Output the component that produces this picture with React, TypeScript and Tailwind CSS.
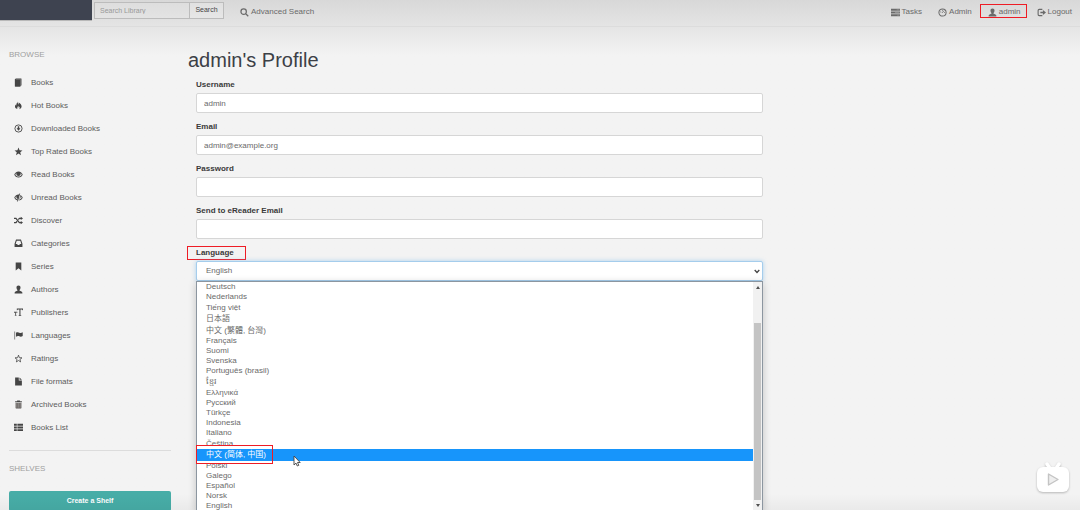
import { useState } from 'react';
import type { ReactNode } from 'react';

type IconName =
  | 'book' | 'fire' | 'download' | 'star' | 'eye' | 'eyeOff' | 'random' | 'inbox'
  | 'bookmark' | 'user' | 'textSize' | 'flag' | 'starEmpty' | 'file' | 'trash' | 'list'
  | 'search' | 'tasks' | 'dashboard' | 'logout';

const icons: Record<IconName, ReactNode> = {
  book: <><path d="M1.500 2.200 3.400 .8H13v12l-1.300 1.700V2.600H3.400L3 3h8v12H1.500z" /><path d="M2 3h9.500v12H2z" /><path d="M13.300 1.500v11.500" stroke="#999" strokeWidth="1.400" /></>,
  fire: <path d="M5.500 1c.4 2.400 2 3.300 2.100 5.600C8.300 5.500 8.500 4 8.200 2.600c3 1.300 5.800 4.300 5.300 7.400-.3 2-1.800 3.700-4 4.500.9-1.500 1-3 .2-4.600-.3 1-.7 1.500-1.400 1.900.2-1.400-.3-2.500-1.100-3.400-.2 2-2 2.800-1.300 6C3 13.600 1.300 11.500 1.800 9c.2-1.100.8-2 1.400-2.800.1.900.3 1.500.8 1.900C3.700 5.600 5.800 4 5.500 1z" />,
  download: <><circle cx="8" cy="8" r="6.400" fill="none" stroke="currentColor" strokeWidth="1.600" /><path d="M6.700 4h2.600v3.500h2.200L8 11.800 4.500 7.500h2.200z" /></>,
  star: <path d="m8 1 1.900 4.900 5.200.3-4 3.300 1.300 5.100L8 11.700l-4.400 2.900 1.300-5.100-4-3.300 5.200-.3z" />,
  eye: <path fillRule="evenodd" d="M8 2.500c3.700 0 6.400 2.500 7.500 5.500-1.100 3-3.800 5.500-7.500 5.500S1.600 11 .5 8C1.600 5 4.300 2.500 8 2.500zM4.300 5.700C3.300 6.300 2.700 7.100 2.300 8c1.200 2.400 3.200 3.700 5.700 3.700s4.500-1.300 5.700-3.700c-.4-.9-1-1.700-2-2.300.6 3-1.200 4.900-3.700 4.900S3.700 8.700 4.300 5.700z" />,
  eyeOff: <><path fillRule="evenodd" d="M8 2.500c3.700 0 6.400 2.500 7.500 5.500-1.100 3-3.800 5.500-7.500 5.500S1.600 11 .5 8C1.600 5 4.300 2.500 8 2.500zM4.300 5.700C3.300 6.300 2.700 7.100 2.300 8c1.200 2.400 3.200 3.700 5.700 3.700s4.500-1.300 5.700-3.700c-.4-.9-1-1.700-2-2.300.6 3-1.200 4.900-3.700 4.900S3.700 8.700 4.300 5.700z" /><path d="M11 1 7.500 15" stroke="#f3f3f3" strokeWidth="2" /><path d="M10 1 6.200 15" stroke="currentColor" strokeWidth="1.600" /></>,
  random: <><path d="M0 4.300h3.500l6 7.400H13M0 11.700h3.500l2-2.400M7.800 6.500l1.700-2.200H13" fill="none" stroke="currentColor" strokeWidth="2.200" /><path d="m12 1.300 4 3-4 3zM12 8.700l4 3-4 3z" /></>,
  inbox: <path fillRule="evenodd" d="M3.600 1h8.800L15 8.500V14H1V8.500zm1.200 2L3 8.700h2.600l1 2h2.800l1-2H13L11.200 3z" />,
  bookmark: <path d="M3 1h10v14l-5-4-5 4z" />,
  user: <path d="M8 .8c2.300 0 3.600 1.600 3.600 3.800 0 1.900-.7 3.300-1.700 4.200v1.600c2 .9 5 1.500 5 3.200V15H1.100v-1.400c0-1.700 3-2.300 5-3.200V8.800c-1-.9-1.700-2.300-1.700-4.200C4.400 2.400 5.700.8 8 .8z" />,
  textSize: <path d="M5 1h11v3h-.8c-.2-1-.7-1.400-1.700-1.400h-2v9.900c0 .8.400 1 1.500 1v.8H8.200v-.8c1.100 0 1.400-.2 1.400-1V2.600H7.500C6.500 2.600 6 3 5.800 4H5zM0 6.500h5.800V9h-.6c-.1-.8-.4-1-1-1h-.5v4.500c0 .4.200.6.800.6v.6H1.400v-.6c.6 0 .8-.2.8-.6V8h-.6c-.6 0-.9.200-1 1H0z" />,
  flag: <><path d="M.5 1H2v14H.5z" fill="#777" /><path d="M3.500 3c2.500-1.500 4.500-.8 6 0s3.500.7 6-.6V9c-2.500 1.500-4.500 1.300-6 .4S6 8.300 3.500 10z" /></>,
  starEmpty: <path d="m8 2 1.600 4.600 4.600.2-3.600 2.900 1.200 4.400L8 11.600l-3.800 2.500 1.200-4.400-3.600-2.900 4.600-.2z" fill="none" stroke="currentColor" strokeWidth="1.400" />,
  file: <path d="M2 1h6.500v5H14v9H2zM9.800 1 14 5H9.800z" />,
  trash: <><path d="M5.500.8h5V2H14v2H2V2h3.500z" /><path d="M3 5h10v10H3z" fill="#8a8785" /><path d="M3.600 5v9.300h8.800V5M6.300 5.500V14M9.700 5.500V14" fill="none" stroke="#66605e" strokeWidth="1" /></>,
  list: <path d="M0 1.500h5v3.500H0zM6 1.500h10v3.500H6zM0 6.200h5v3.500H0zM6 6.200h10v3.500H6zM0 10.900h5v3.500H0zM6 10.900h10v3.500H6z" />,
  search: <path d="M6.500 1.700a4.800 4.800 0 1 1 0 9.600 4.800 4.800 0 0 1 0-9.600zM10.200 10.200l4.500 4.500" fill="none" stroke="currentColor" strokeWidth="2.200" />,
  tasks: <><path d="M0 1.500h16v3.600H0zM0 6.200h16v3.600H0zM0 10.900h16v3.600H0z" /><path d="M10 3.300h5M7 8h8M11 12.700h4" stroke="#aaa" strokeWidth="1" /></>,
  dashboard: <><circle cx="8" cy="8" r="6.400" fill="none" stroke="currentColor" strokeWidth="1.800" /><path d="M7 8.800 11 4.500M4 7h1.500M7.200 4.200h1.500M11 8h1.500" fill="none" stroke="currentColor" strokeWidth="1.500" /></>,
  logout: <><path d="M9.500 2.500H3.800C2.500 2.500 2 3 2 4.300v7.400c0 1.300.5 1.800 1.800 1.800h5.700" fill="none" stroke="currentColor" strokeWidth="2" /><path d="M6 6.500h4.500V3.500L16 8l-5.500 4.500v-3H6z" /></>,
};

const browseLinks: { icon: IconName; label: string }[] = [
  { icon: 'book', label: 'Books' },
  { icon: 'fire', label: 'Hot Books' },
  { icon: 'download', label: 'Downloaded Books' },
  { icon: 'star', label: 'Top Rated Books' },
  { icon: 'eye', label: 'Read Books' },
  { icon: 'eyeOff', label: 'Unread Books' },
  { icon: 'random', label: 'Discover' },
  { icon: 'inbox', label: 'Categories' },
  { icon: 'bookmark', label: 'Series' },
  { icon: 'user', label: 'Authors' },
  { icon: 'textSize', label: 'Publishers' },
  { icon: 'flag', label: 'Languages' },
  { icon: 'starEmpty', label: 'Ratings' },
  { icon: 'file', label: 'File formats' },
  { icon: 'trash', label: 'Archived Books' },
  { icon: 'list', label: 'Books List' },
];

const topLinks: { icon: IconName; label: string; marked?: boolean }[] = [
  { icon: 'tasks', label: 'Tasks' },
  { icon: 'dashboard', label: 'Admin' },
  { icon: 'user', label: 'admin', marked: true },
  { icon: 'logout', label: 'Logout' },
];

const languages: { label: string; row?: string }[] = [
  { label: 'Deutsch' },
  { label: 'Nederlands' },
  { label: 'Tiếng việt', row: 'h-[11px]' },
  { label: '日本語', row: 'h-[12px]' },
  { label: '中文 (繁體, 台灣)', row: 'h-[11px]' },
  { label: 'Français' },
  { label: 'Suomi' },
  { label: 'Svenska' },
  { label: 'Português (brasil)' },
  { label: 'ខ្មែរ', row: 'h-[12px]' },
  { label: 'Ελληνικά' },
  { label: 'Русский' },
  { label: 'Türkçe' },
  { label: 'Indonesia' },
  { label: 'Italiano' },
  { label: 'Čeština', row: 'h-[11px]' },
  { label: '中文 (简体, 中国)', row: 'h-[12px]' },
  { label: 'Polski' },
  { label: 'Galego' },
  { label: 'Español' },
  { label: 'Norsk' },
  { label: 'English' },
];

const labelClass = 'relative mb-[2px] block w-fit font-bold leading-3 text-[#3a3a3a]';

export default function App() {
  const [language, setLanguage] = useState('English');

  return (
    <div className="relative flex h-screen flex-col overflow-hidden bg-[#f3f3f3] bg-linear-to-b from-[#d8d8d8] from-0% via-[#f3f3f3] via-11% to-[#f3f3f3] font-['Liberation_Sans','Noto_Sans_CJK_SC',sans-serif] text-[8px] text-[#5c5c5c]">
      <TopBar />
      <div className="flex min-h-0 flex-1">
        <Sidebar />
        <main className="min-w-0 flex-1 pt-[19px] pr-[17px] pl-2">
          <h1 className="mb-[5px] text-[20px] leading-7 text-[#3c4046]">admin's Profile</h1>
          <form className="w-2/3 px-2" onSubmit={(e) => e.preventDefault()}>
            <Field id="username" label="Username" type="text" value="admin" />
            <Field id="email" label="Email" type="email" value="admin@example.org" />
            <Field id="password" label="Password" type="password" />
            <Field id="kindle_mail" label="Send to eReader Email" type="email" />
            <div className="relative">
              <label htmlFor="locale" className={labelClass}>
                Language
                <span className="absolute -top-[1px] -right-3 -bottom-[1px] -left-[9px] border border-[#ee1c25]" />
              </label>
              <div className="relative">
                <select
                  id="locale"
                  value={language}
                  onChange={(e) => setLanguage(e.target.value)}
                  className="block h-5 w-full appearance-none rounded-[2px] border border-[#a5cdec] bg-white px-[9px] text-[8px] text-[#6a6a6a] shadow-[0_0_4px_rgba(102,175,233,0.5)] outline-none"
                >
                  {languages.map(({ label }) => <option key={label}>{label}</option>)}
                </select>
                <svg className="pointer-events-none absolute top-2 right-[3px] h-[5px] w-[6px]" viewBox="0 0 6 5" fill="none" stroke="#444" strokeWidth="1.300"><path d="m.7 1 2.300 2.500L5.300 1" /></svg>
              </div>
              <LanguageMenu onPick={setLanguage} />
            </div>
          </form>
        </main>
      </div>
      <PlayerBadge />
      <div className="pointer-events-none absolute inset-x-0 bottom-0 h-4 bg-linear-to-t from-black/4 to-transparent" />
    </div>
  );
}

function Icon({ name, className }: { name: IconName; className?: string }) {
  return (
    <svg viewBox="0 0 16 16" fill="currentColor" aria-hidden="true" className={`size-[9px] shrink-0 ${className ?? ''}`}>
      {icons[name]}
    </svg>
  );
}

function TopBar() {
  return (
    <header className="flex h-[27px] shrink-0 items-start border-b border-[#dcdcdc] text-[#6a6a6a]">
      <a href="#home" aria-label="Home" className="block h-[21px] w-[92px] border-b border-[#b8b8b8] bg-[#3e4350]" />
      <form className="mt-[2px] ml-[2px] flex" onSubmit={(e) => e.preventDefault()}>
        <input aria-label="Search Library" placeholder="Search Library" className="h-[17px] w-24 border border-[#bcbcbc] bg-white/10 px-[5px] text-[7px] outline-none placeholder:text-[#999]" />
        <button type="submit" className="h-[17px] w-[34px] border border-l-0 border-[#bcbcbc] bg-white/20 text-[7px] text-[#444]">Search</button>
      </form>
      <a href="#advanced" className="mt-[6px] ml-4 flex items-center gap-[2px] leading-3">
        <Icon name="search" />
        Advanced Search
      </a>
      <nav className="mt-[6px] mr-2 ml-auto flex gap-4 leading-3">
        {topLinks.map(({ icon, label, marked }) => (
          <a key={label} href={`#${label}`} className="relative flex items-center gap-[2px]">
            <Icon name={icon} />
            {label}
            {marked && <span className="absolute -top-[2px] -right-[6px] bottom-0 -left-2 border border-[#ee1c25]" />}
          </a>
        ))}
      </nav>
    </header>
  );
}

function Sidebar() {
  return (
    <aside className="w-1/6 shrink-0 px-[9px] pt-[22px]">
      <h2 className="leading-3 text-[#a0a0a0]">BROWSE</h2>
      <ul className="mt-[10px]">
        {browseLinks.map(({ icon, label }) => (
          <li key={label}>
            <a href={`#${label}`} className="flex h-[23px] items-center gap-2 pl-[5px]">
              <Icon name={icon} className="text-[#454545]" />
              {label}
            </a>
          </li>
        ))}
      </ul>
      <h2 className="mt-[11px] border-t border-[#dcdcdc] pt-3 leading-3 text-[#a0a0a0]">SHELVES</h2>
      <button className="mt-4 h-5 w-full rounded-[2px] bg-[#47ada7] text-[7px] font-bold text-white">Create a Shelf</button>
    </aside>
  );
}

function Field({ id, label, type, value }: { id: string; label: string; type: string; value?: string }) {
  return (
    <div className="mb-2">
      <label htmlFor={id} className={labelClass}>{label}</label>
      <input
        id={id}
        type={type}
        defaultValue={value}
        autoComplete="off"
        className="block h-5 w-full rounded-[2px] border border-[#d6d6d6] bg-white px-[7px] text-[8px] text-[#6a6a6a] outline-none"
      />
    </div>
  );
}

function LanguageMenu({ onPick }: { onPick: (label: string) => void }) {
  const active = '中文 (简体, 中国)';

  return (
    <div className="absolute inset-x-0 top-full z-10 flex border border-[#8c96a0] bg-white shadow-[0_2px_8px_rgba(0,0,0,0.2)]">
      <ul role="listbox" aria-label="Language" className="min-w-0 flex-1">
        {languages.map(({ label, row }) => (
          <li
            key={label}
            role="option"
            aria-selected={label === active}
            onClick={() => onPick(label)}
            className={`relative flex items-center pl-[9px] leading-[10px] whitespace-nowrap ${row ?? 'h-[10px]'} ${label === active ? 'z-10 bg-[#1795fb] text-white' : 'text-[#6a6a6a]'}`}
          >
            {label}
            {label === active && (
              <>
                <span className="absolute -top-1 -bottom-[3px] -left-px w-[77px] border border-[#ee1c25]" />
                <svg className="absolute top-[6px] left-24 h-3 w-2" viewBox="0 0 8 12" fill="#fff" stroke="#444" strokeWidth=".9"><path d="M1 1v9l2-1.900L4.300 11l1.500-.7L4.500 7.500h2.700z" /></svg>
              </>
            )}
          </li>
        ))}
      </ul>
      <div className="flex w-[9px] flex-col items-center bg-[#f1f1f1]">
        <svg className="my-1 h-[3px] w-1" viewBox="0 0 4 3" fill="#505050"><path d="M2 0l2 3H0z" /></svg>
        <div className="mt-[30px] w-[7px] flex-1 bg-[#c4c4c4]" />
        <svg className="my-1 h-[3px] w-1" viewBox="0 0 4 3" fill="#505050"><path d="M0 0h4L2 3z" /></svg>
      </div>
    </div>
  );
}

function PlayerBadge() {
  return (
    <button aria-label="Play" className="absolute right-2 bottom-4 drop-shadow-[0_1px_1px_rgba(0,0,0,0.25)]">
      <svg className="h-8 w-[38px]" viewBox="0 0 38 32" fill="#fff">
        <path d="m13 2 3 4.500M25 2l-3 4.500" stroke="#fff" strokeWidth="3.400" strokeLinecap="round" />
        <rect x="3" y="5" width="32" height="25" rx="6" />
        <path d="M14.500 12v11l9.500-5.500z" fill="#eee" stroke="#c4c4c4" strokeWidth="1.400" strokeLinejoin="round" />
      </svg>
    </button>
  );
}
